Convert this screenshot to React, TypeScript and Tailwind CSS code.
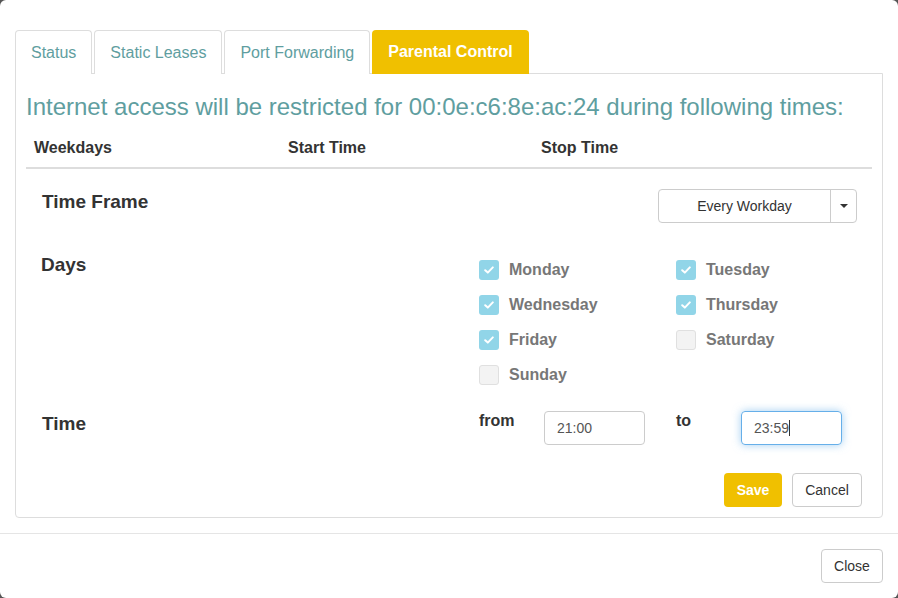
import React from "react";

const font = { fontFamily: '"Liberation Sans", Arial, sans-serif' };

function Check({ checked, label }: { checked: boolean; label: string }) {
  return (
    <div className="flex items-center h-[20px]">
      {checked ? (
        <div className="w-[20px] h-[20px] shrink-0 rounded-[3px] bg-[#91d5e8] flex items-center justify-center">
          <svg width="10" height="8" viewBox="0 0 10 8">
            <path d="M1.2 4.2 L3.8 6.6 L8.8 1.4" stroke="white" strokeWidth="2" fill="none" strokeLinecap="round" strokeLinejoin="round" />
          </svg>
        </div>
      ) : (
        <div className="w-[20px] h-[20px] shrink-0 rounded-[3px] bg-[#f3f3f3] border border-[#e0e0e0]" />
      )}
      <span className="ml-[10px] text-[16px] font-bold text-[#777]">{label}</span>
    </div>
  );
}

export default function App() {
  const tabs = ["Status", "Static Leases", "Port Forwarding"];
  return (
    <div className="w-[898px] h-[598px] bg-[#555]" style={font}>
      <div className="w-full h-full bg-white rounded-[6px] flex flex-col">
        <div className="px-[15px] pt-[30px] pb-[15px]">
          <div className="flex gap-[2px] -mb-px relative z-10">
            {tabs.map((t) => (
              <div
                key={t}
                className="h-[44px] px-[15px] flex items-center border border-[#ddd] border-b-0 rounded-t-[4px] text-[16px] text-[#5f9ea0] bg-white"
              >
                {t}
              </div>
            ))}
            <div className="h-[44px] px-[16px] flex items-center rounded-t-[4px] text-[16px] font-bold text-white bg-[#f0c000]">
              Parental Control
            </div>
          </div>
          <div className="border border-[#ddd] rounded-b-[4px] px-[10px] pt-[19px] pb-[10px]">
            <div className="text-[24px] leading-[28px] text-[#5f9ea0] whitespace-nowrap">
              Internet access will be restricted for 00:0e:c6:8e:ac:24 during following times:
            </div>
            <div className="mt-[8px] flex border-b-2 border-[#ddd] text-[16px] font-bold text-[#333] leading-[22px]">
              <div className="w-[254px] px-[8px] py-[8px]">Weekdays</div>
              <div className="w-[253px] px-[8px] py-[8px]">Start Time</div>
              <div className="flex-1 px-[8px] py-[8px]">Stop Time</div>
            </div>
            <div className="pl-[16px] pr-[15px] pt-[20px] text-[#333]">
              <div className="flex justify-between items-start">
                <div className="mt-[3px] text-[19px] leading-[20px] font-bold">Time Frame</div>
                <div className="flex h-[34px] border border-[#ccc] rounded-[4px] text-[14px] text-[#333]">
                  <div className="w-[172px] flex items-center justify-center border-r border-[#ccc]">Every Workday</div>
                  <div className="w-[25px] flex items-center justify-center">
                    <svg width="8" height="4" viewBox="0 0 8 4">
                      <path d="M0 0 L8 0 L4 4 Z" fill="#333" />
                    </svg>
                  </div>
                </div>
              </div>
              <div className="flex mt-[32px]">
                <div className="w-[437px] shrink-0 -ml-[1px] text-[19px] leading-[20px] font-bold">Days</div>
                <div className="ml-[1px] mt-[5px] grid grid-cols-[197px_197px] gap-y-[15px] shrink-0">
                  <Check checked label="Monday" />
                  <Check checked label="Tuesday" />
                  <Check checked label="Wednesday" />
                  <Check checked label="Thursday" />
                  <Check checked label="Friday" />
                  <Check checked={false} label="Saturday" />
                  <Check checked={false} label="Sunday" />
                </div>
              </div>
              <div className="flex mt-[26px] items-start">
                <div className="w-[437px] shrink-0 mt-[3px] text-[19px] leading-[20px] font-bold">Time</div>
                <div className="w-[65px] shrink-0 text-[16px] font-bold leading-[20px]">from</div>
                <div className="w-[101px] shrink-0 h-[34px] border border-[#ccc] rounded-[4px] px-[12px] flex items-center text-[14px] text-[#555]">
                  21:00
                </div>
                <div className="w-[31px] shrink-0" />
                <div className="w-[65px] shrink-0 text-[16px] font-bold leading-[20px]">to</div>
                <div className="w-[101px] shrink-0 h-[34px] border border-[#66afe9] rounded-[4px] px-[12px] flex items-center text-[14px] text-[#555] shadow-[0_0_8px_rgba(102,175,233,0.6)]">
                  23:59
                  <span className="inline-block w-px h-[16px] bg-[#333]" />
                </div>
              </div>
            </div>
            <div className="flex justify-end gap-[10px] mt-[28px] mr-[10px]">
              <div className="w-[58px] h-[34px] rounded-[4px] bg-[#f0c000] text-white text-[14px] font-bold flex items-center justify-center">
                Save
              </div>
              <div className="w-[70px] h-[34px] rounded-[4px] border border-[#ccc] text-[#333] text-[14px] flex items-center justify-center">
                Cancel
              </div>
            </div>
          </div>
        </div>
        <div className="border-t border-[#e5e5e5] p-[15px] flex justify-end">
          <div className="w-[62px] h-[34px] rounded-[4px] border border-[#ccc] text-[#333] text-[14px] flex items-center justify-center">
            Close
          </div>
        </div>
      </div>
    </div>
  );
}
